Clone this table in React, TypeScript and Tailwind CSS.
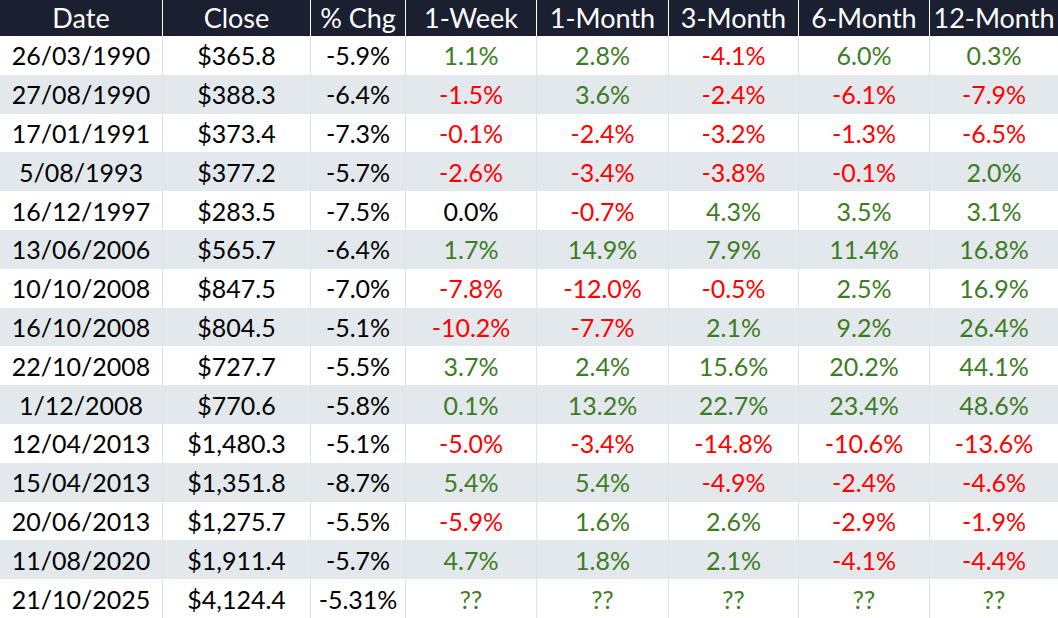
import React from "react";

const headers = ["Date", "Close", "% Chg", "1-Week", "1-Month", "3-Month", "6-Month", "12-Month"];

const rows: string[][] = [
  ["26/03/1990", "$365.8", "-5.9%", "1.1%", "2.8%", "-4.1%", "6.0%", "0.3%"],
  ["27/08/1990", "$388.3", "-6.4%", "-1.5%", "3.6%", "-2.4%", "-6.1%", "-7.9%"],
  ["17/01/1991", "$373.4", "-7.3%", "-0.1%", "-2.4%", "-3.2%", "-1.3%", "-6.5%"],
  ["5/08/1993", "$377.2", "-5.7%", "-2.6%", "-3.4%", "-3.8%", "-0.1%", "2.0%"],
  ["16/12/1997", "$283.5", "-7.5%", "0.0%", "-0.7%", "4.3%", "3.5%", "3.1%"],
  ["13/06/2006", "$565.7", "-6.4%", "1.7%", "14.9%", "7.9%", "11.4%", "16.8%"],
  ["10/10/2008", "$847.5", "-7.0%", "-7.8%", "-12.0%", "-0.5%", "2.5%", "16.9%"],
  ["16/10/2008", "$804.5", "-5.1%", "-10.2%", "-7.7%", "2.1%", "9.2%", "26.4%"],
  ["22/10/2008", "$727.7", "-5.5%", "3.7%", "2.4%", "15.6%", "20.2%", "44.1%"],
  ["1/12/2008", "$770.6", "-5.8%", "0.1%", "13.2%", "22.7%", "23.4%", "48.6%"],
  ["12/04/2013", "$1,480.3", "-5.1%", "-5.0%", "-3.4%", "-14.8%", "-10.6%", "-13.6%"],
  ["15/04/2013", "$1,351.8", "-8.7%", "5.4%", "5.4%", "-4.9%", "-2.4%", "-4.6%"],
  ["20/06/2013", "$1,275.7", "-5.5%", "-5.9%", "1.6%", "2.6%", "-2.9%", "-1.9%"],
  ["11/08/2020", "$1,911.4", "-5.7%", "4.7%", "1.8%", "2.1%", "-4.1%", "-4.4%"],
  ["21/10/2025", "$4,124.4", "-5.31%", "??", "??", "??", "??", "??"],
];

function colorFor(ci: number, v: string): string {
  if (ci < 3) return "text-black";
  if (v === "0.0%") return "text-black";
  if (v.startsWith("-")) return "text-[#ff0000]";
  return "text-[#3d7c24]";
}

export default function App() {
  return (
    <div
      className="w-[1058px] h-[618px] bg-white overflow-hidden grid grid-cols-[163px_148px_95px_131px_132px_130px_131px_128px] grid-rows-[36px_repeat(15,minmax(0,1fr))] text-[25px] leading-none"
      style={{ fontFamily: "Lato, 'Open Sans', sans-serif" }}
    >
      {headers.map((h, i) => (
        <div
          key={h}
          className={`flex items-center justify-center bg-[#1b2030] text-white text-[27px] ${i < 7 ? "border-r border-white" : ""}`}
        >
          <span className="pb-[1px]">{h}</span>
        </div>
      ))}
      {rows.map((r, ri) =>
        r.map((v, ci) => (
          <div
            key={ri + "-" + ci}
            className={`flex items-center justify-center ${ri % 2 === 1 ? "bg-[#e2e8ec]" : "bg-white"} ${ci < 7 ? "border-r border-[#dde4e8]" : ""} ${colorFor(ci, v)}`}
          >
            <span className="pt-[1px]">{v}</span>
          </div>
        ))
      )}
    </div>
  );
}
